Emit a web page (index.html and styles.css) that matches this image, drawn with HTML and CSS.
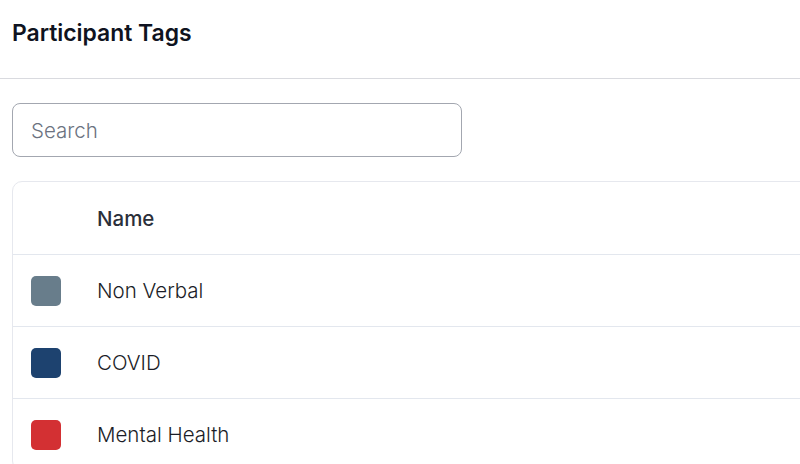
FILE: index.html
```html
<!DOCTYPE html>
<html>
<head>
<meta charset="utf-8">
<link rel="stylesheet" href="styles.css">
</head>
<body>
<header class="page-header">
  <h1 class="title">Participant Tags</h1>
</header>
<main class="content">
  <div class="search">
    <input class="search-input" type="text" placeholder="Search">
  </div>
  <div class="card">
    <div class="row head">
      <div class="cell-swatch"></div>
      <div class="cell-name">Name</div>
    </div>
    <div class="row">
      <div class="cell-swatch"><span class="swatch slate"></span></div>
      <div class="cell-name">Non Verbal</div>
    </div>
    <div class="row">
      <div class="cell-swatch"><span class="swatch navy"></span></div>
      <div class="cell-name">COVID</div>
    </div>
    <div class="row">
      <div class="cell-swatch"><span class="swatch red"></span></div>
      <div class="cell-name">Mental Health</div>
    </div>
  </div>
</main>
</body>
</html>
```

FILE: styles.css
```css
* { box-sizing: border-box; }
html, body {
  margin: 0;
  padding: 0;
  background: #ffffff;
  overflow: hidden;
  height: 464px;
}
body {
  font-family: Inter, "Noto Sans", sans-serif;
  color: #111827;
}
.page-header {
  height: 79px;
  border-bottom: 1px solid #d9dadf;
  padding: 19px 12px 0;
}
.title {
  margin: 0;
  font-size: 22.9px;
  font-weight: 600;
  line-height: 28px;
  color: #0f1320;
}
.content {
  padding: 24px 0 0 12px;
  overflow: hidden;
  height: 385px;
}
.search-input {
  display: block;
  width: 450px;
  height: 54px;
  border: 1.5px solid #a3a7b0;
  border-radius: 8px;
  padding: 0 18px;
  font-family: Inter, "Noto Sans", sans-serif;
  font-size: 20.5px;
  font-weight: 350;
  color: #111827;
  outline: none;
  background: #fff;
}
.search-input::placeholder { color: #6b7280; }
.card {
  margin-top: 24px;
  width: 900px;
  border: 1px solid #e6e8ee;
  border-radius: 10px;
}
.row {
  display: flex;
  align-items: center;
  height: 72px;
  border-top: 1px solid #e3e7ee;
}
.row.head {
  height: 72px;
  border-top: none;
}
.cell-swatch {
  width: 84px;
  padding-left: 18px;
  display: flex;
  align-items: center;
}
.cell-name {
  font-size: 20.5px;
  color: #1b1d27;
  font-weight: 350;
}
.head .cell-name {
  font-weight: 500;
  color: #2b2f3a;
}
.swatch {
  display: block;
  width: 30px;
  height: 30px;
  border-radius: 5px;
}
.slate { background: #687d8b; }
.navy { background: #1d426f; }
.red { background: #d33033; }
```
